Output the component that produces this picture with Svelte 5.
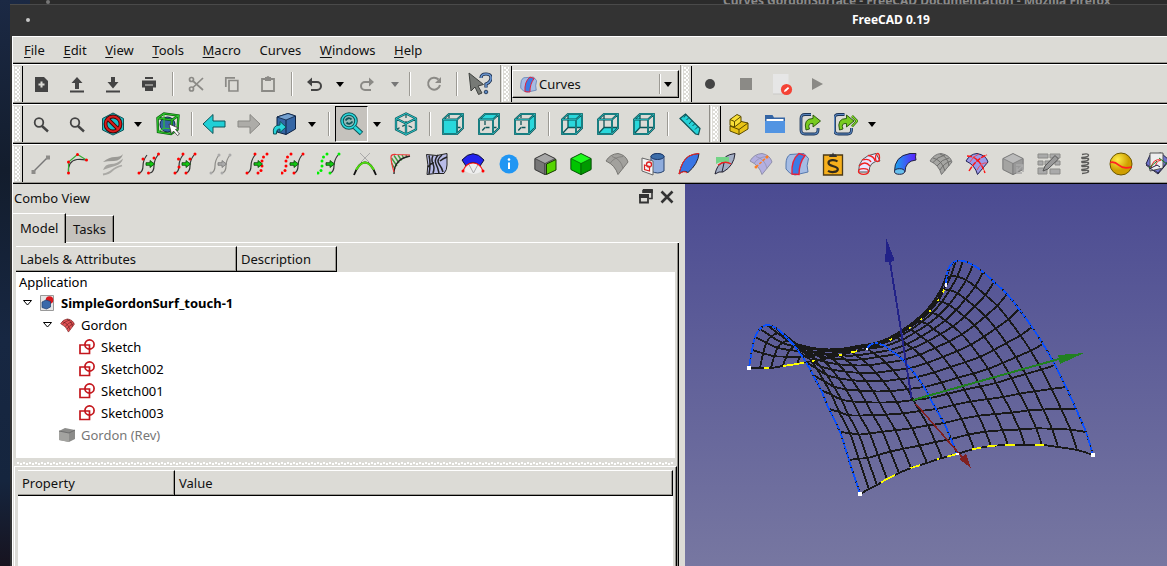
<script>
  const menus = ['File', 'Edit', 'View', 'Tools', 'Macro', 'Curves', 'Windows', 'Help'];

  const K = '#444';
  const G = '#8b8a86';
  const T = '#0d5558';
  const C = '#2ad8dc';

  // wireframe cube with one highlighted face; hidden edges go below a near face
  const cube = (face, near) => {
    const f = `<path d="${face}" fill="${C}"/>`;
    const inner = `<path d="M8 2V15.500H22M8 15.500 2 22" stroke="${T}" stroke-width="1.300" stroke-dasharray="${near ? '4 3' : 'none'}"/>`;
    const d = 'M2 7.500 8 2H22V16L16 22H2ZM2 7.500H16V22M16 7.500 22 2';
    return `<g stroke-linejoin="round" fill="none">${near ? inner + f : f + inner}<path d="${d}" stroke="${T}" stroke-width="2"/><path d="${d}" stroke="#2dbdc0" stroke-width=".8"/></g>`;
  };

  const dots = (pts, c) => pts.map(([x, y]) => `<circle cx="${x}" cy="${y}" r="1.5" fill="${c}"/>`).join('');
  const wave = (x, c = '#333') => `<path d="M${x} 21q4-1 4-7t4-11" fill="none" stroke="${c}" stroke-width="1.2"/>`;
  const arrow = (c, s) => `<path d="M9 10.7h4V8.5l4.5 3.5-4.5 3.5v-2.2H9z" fill="${c}" stroke="${s}" stroke-width=".8"/>`;
  const zig = (x) => [[x, 21], [x + 3, 18.5], [x + 4, 14], [x + 4, 9], [x + 5.5, 5], [x + 9, 2]];
  const fan = (f, s) => `<path d="M1 9Q5 2 13 1.500 21 3 23 10L13 22.500Q10 13 1 9Z" fill="${f}" stroke="${s}"/><path d="M5 11.500Q9 5 18 4.500M7 4.500Q16 7 18 16.500" fill="none" stroke="${s}" stroke-width=".7"/>`;
  const mesh = (s) => `<path d="M4 6Q13 8 16 19M11 2Q19 5 20 14M4 10.500Q8 5 16 3M8 14Q13 7 20 6M11 18Q15 11 22 9" fill="none" stroke="${s}" stroke-width=".9"/>`;
  const box = (a, b, c, s) => `<path d="M12 1.500 22 6.500V17.500L12 22.500 2 17.500V6.500Z" fill="${a}" stroke="${s}"/><path d="M2 6.500 12 11.500V22.500L2 17.500Z" fill="${b}" stroke="${s}" stroke-width=".7"/><path d="M12 11.500 22 6.500V17.500L12 22.500Z" fill="${c}" stroke="${s}" stroke-width=".7"/>`;
  const lens = `<circle cx="10" cy="10.500" r="4.300" fill="none" stroke="${K}" stroke-width="1.800"/><path d="m13 14 6 5.500" stroke="${K}" stroke-width="2.400"/>`;
  const share = (d) => `<path d="M12 2.500H6q-4 0-4 4V18q0 4 4 4H15q4 0 4-4V16" fill="none" stroke="#1d3557" stroke-width="2.800"/><path d="M12 2.500H6q-4 0-4 4V18q0 4 4 4H15q4 0 4-4V16" fill="none" stroke="#5a87c0" stroke-width="1.100"/><path d="M7 18Q4 6.500 14 6.500V3l7.500 6-7.500 6V11.500Q8 11 10.500 17Z" fill="#78cb20" stroke="#235008" stroke-width=".9"/>${d}`;

  const icons = {
    doc: `<path d="M6 5h9l4 4v11H6z" fill="${K}"/><path d="M12.500 9.500v6M9.500 12.500h6" stroke="#dcdbd6" stroke-width="2"/>`,
    up: `<path d="M5 18.500H19V20.500H5zM12 5l5.500 6H14v6h-4v-6H6.500z" fill="${K}"/>`,
    down: `<path d="M5 18.500H19V20.500H5zM10 5h4v5h3.500L12 16.500 6.500 10H10z" fill="${K}"/>`,
    print: `<path d="M8 5h8v2H8zM5 8.500H19v7H16v3.500H8v-3.500H5z" fill="${K}"/><path d="M8 13h8" stroke="#dcdbd6"/>`,
    cut: `<g fill="none" stroke="${G}" stroke-width="1.700"><circle cx="7.500" cy="7.500" r="2"/><circle cx="7.500" cy="17" r="2"/><path d="m9 9 10 9M9 15.500 19 6"/></g>`,
    copy: `<g fill="none" stroke="${G}" stroke-width="1.700"><path d="M5.800 15V5.800H15"/><path d="M9 8.500h8.800V19H9z"/></g>`,
    paste: `<path d="M6 7H18V19H6z" fill="none" stroke="${G}" stroke-width="1.800"/><path d="M9 5h6v4H9z" fill="${G}"/><circle cx="12" cy="5.500" r="1.500" fill="${G}"/>`,
    undo: `<path d="M6 10H15a3.700 3.700 0 0 1 0 8H9" fill="none" stroke="${K}" stroke-width="2"/><path d="M10 5.500 5 10l5 4.500z" fill="${K}"/>`,
    redo: `<path d="M18 10H10a3.700 3.700 0 0 0 0 8h6" fill="none" stroke="${G}" stroke-width="2"/><path d="m14 5.500 5 4.500-5 4.500z" fill="${G}"/>`,
    refresh: `<path d="M16.500 7.500A6 6 0 1 0 18 13" fill="none" stroke="${G}" stroke-width="2"/><path d="M19 5v6h-6z" fill="${G}"/>`,
    whats: `<path d="M1 1 15.500 12.500 10 14l4 7-3.500 1.500-3.500-7.500-4 4z" fill="#777a76" stroke="#3f423f"/><path d="M13 6q0-4 5-4t5 4-5 6v3.500" fill="none" stroke="#172a48" stroke-width="3.200"/><path d="M13 6q0-4 5-4t5 4-5 6v3.500" fill="none" stroke="#6b96d0" stroke-width="1.600"/><circle cx="18" cy="20" r="1.800" fill="#5a87c0" stroke="#172a48" stroke-width=".8"/>`,
    rec: `<circle cx="12" cy="12" r="5" fill="${K}"/>`,
    stop: `<path d="M6 6H18V18H6z" fill="${G}"/>`,
    macro: `<path d="M2 2H17.500V22H2z" fill="#e6e6e6"/><path d="M2 22h15" stroke="#c9c9c6"/><circle cx="15.500" cy="17.500" r="5.600" fill="#f44336"/><path d="m13 20 .5-2 3.500-3 1.200 1.200-3 3z" fill="#fff"/>`,
    play: `<path d="M7 6 18 12 7 18z" fill="${G}"/>`,
    lens,
    nodraw: `<path d="M12 1 22.500 6.500V18L12 23 1.500 18V6.500Z" fill="#1dbcc4" stroke="${T}"/><circle cx="12" cy="12" r="7.500" fill="none" stroke="#3b0505" stroke-width="3.800"/><path d="m6.800 6.800 10.500 10.500" stroke="#3b0505" stroke-width="3.800"/><circle cx="12" cy="12" r="7.500" fill="none" stroke="#d81b1b" stroke-width="2"/><path d="m6.500 6.500 11 11" stroke="#d81b1b" stroke-width="2"/>`,
    bbox: `<circle cx="11.500" cy="12.500" r="7.500" fill="#3465a4" stroke="#10284b"/><path d="M1.500 6 8 1.500 22.500 3.500 21.500 17.500 15 22 2 20zM1.500 6 16 8 15 22M16 8l6.500-4.500" fill="none" stroke="#0a5a0a" stroke-width="2.400"/><path d="M1.500 6 8 1.500 22.500 3.500 21.500 17.500 15 22 2 20zM1.500 6 16 8 15 22M16 8l6.500-4.500M8 2V16M2 20l6-4 13 1.500" fill="none" stroke="#2cc52c" stroke-width="1.100"/><path d="m13 12 9.500 4-3 1.500 4 4.500-2 1.500-4-4.500-2 3z" fill="#fff" stroke="#333" stroke-width=".8"/>`,
    back: `<path d="M1 12 11 2.500V9H23V15H11v6.500Z" fill="#20cfd6" stroke="${T}"/>`,
    fwd: `<path d="M23 12 13 2.500V9H1V15H13v6.500Z" fill="#adaca8" stroke="#898884"/>`,
    link: `<path d="M5 5 16 1.500 23.500 4V17L14 22.500 5 20Z" fill="#3465a4" stroke="#0d2242"/><path d="m5 5 9 3 9.500-4L16 1.500Z" fill="#729fcf" stroke="#0d2242" stroke-width=".8"/><path d="M14 8v14.500" stroke="#0d2242"/><path d="M1.500 22Q0 13 8 13V9.500l6 5.500-6 5.500V17Q4 17 4.500 22Z" fill="#27d4da" stroke="${T}"/>`,
    zoomsel: `<circle cx="9" cy="9" r="7" fill="#93b9b8" stroke="${T}" stroke-width="3.600"/><circle cx="9" cy="9" r="7" fill="none" stroke="${C}" stroke-width="1.600"/><path d="m14.500 15 7 6.500" stroke="${T}" stroke-width="5"/><path d="m14.500 15 6.500 6" stroke="${C}" stroke-width="3"/><path d="M5.500 8.500q3-4 6-1M12.500 9.500q-3 4-6 1" fill="none" stroke="${T}" stroke-width="1.800"/>`,
    iso: `<g fill="none" stroke-linejoin="round"><path d="M12 2V12M2 17.500 12 12.500 22 17.500" stroke="${T}" stroke-width="1.200" stroke-dasharray="4 3"/><path d="M12 1.500 22 6.500V17.500L12 22.500 2 17.500V6.500ZM2 6.500 12 11.500 22 6.500M12 11.500V22.500" stroke="${T}" stroke-width="2.300"/><path d="M12 1.500 22 6.500V17.500L12 22.500 2 17.500V6.500ZM2 6.500 12 11.500 22 6.500M12 11.500V22.500" stroke="#2dc9cc" stroke-width="1"/></g>`,
    front: cube('M2 7.500H16V22H2Z', true),
    top: cube('M2 7.500 8 2H22L16 7.500Z', true),
    right: cube('M16 7.500 22 2V16L16 22Z', true),
    rear: cube('M8 2H22V15.500H8Z'),
    bottom: cube('M2 22 8 15.500H22L16 22Z'),
    left: cube('M2 7.500 8 2V15.500L2 22Z'),
    ruler: `<path d="M2 6.500 7.500 2 22 16.500 20.500 22.500 17.500 22Z" fill="#25d2d8" stroke="${T}" stroke-width="1.200"/><path d="m8 2.500-2 3M11 5.500 8.500 8M14 8.500l-3 3.500M17 11.500 14.500 14M20 14.500l-3 3" stroke="${T}"/>`,
    part: `<path d="M3 14 12 9 21 11V17L12 22.500 3 19Z" fill="#e9c417" stroke="#5a4a00"/><path d="m3 14 9 3.500L21 11M12 17.500v5" stroke="#5a4a00" fill="none"/><path d="M3 7.500 10 2.500 14 4.500V10L7.500 15 3 13.500Z" fill="#f8df36" stroke="#5a4a00"/><path d="M3 7.500 7.500 9.500 14 4.500M7.500 9.500V15" stroke="#5a4a00" fill="none"/>`,
    folder: `<path d="M2 3H9.500l1.500 2.500H22V12H2z" fill="#3465a4"/><path d="M3.500 7H20.500V9H3.500z" fill="#fff"/><path d="M2 9H22V21H2z" fill="#5294e2"/>`,
    exp: share(''),
    exps: `<g transform="translate(-1.500)">${share('<path d="m19.500 4 5 5-5 5.500" fill="none" stroke="#2d6b10" stroke-width="2.600"/><path d="m19.500 4 5 5-5 5.500" fill="none" stroke="#8bdc2b" stroke-width="1.100"/>')}</g>`,
    line: `<path d="m4.500 19.500 14-14" stroke="#777" stroke-width="1.400"/><path d="M2.500 18h4v4h-4zM17 3.500h4v4h-4z" fill="#8d8c89"/>`,
    curve: `<path d="M3.500 21Q2.500 9 12 7.500q4-.5 9 .5" fill="none" stroke="#333" stroke-width="1.200"/><path d="M3.500 21V10L12.500 2.500 21.500 8" fill="none" stroke="#33ad33" stroke-width="1.100"/>${dots([[3.5, 21], [3.5, 10], [12.500, 2.500], [21.5, 8]], '#f00')}`,
    blend: `<g fill="#9a9995"><path d="M2 10Q8 5 14 5T22 2Q20 9 13 9T2 10Z"/><path d="M2 18Q4 12 10 12T22 6.500Q21 12 14 14T2 18Z" fill="#a5a4a0"/></g><path d="M2 22.500q6-1 9-4t10-5" fill="none" stroke="#aaa9a5" stroke-width="1.800"/>`,
    c1: wave(2) + wave(13) + dots([[2, 21], [6, 7], [11.500, 21], [17, 6], [21.500, 2]], '#f00') + arrow('#12c712', '#064006'),
    c2: wave(2) + wave(13) + dots([[2, 21], [6, 15], [5.500, 7], [10, 2], [13, 21], [17, 7], [22, 2]], '#f00') + arrow('#12c712', '#064006'),
    c3: wave(2, G) + wave(13, G) + dots([[2, 21], [10, 3], [13, 21], [21, 3]], '#aaa') + arrow('#aaa', '#777'),
    c4: wave(2) + dots([[2, 21], [10, 2]], '#f00') + dots(zig(13), '#f00') + arrow('#12c712', '#064006'),
    c5: wave(13) + dots([[13, 21], [22, 2]], '#f00') + dots(zig(1), '#f00') + arrow('#12c712', '#064006'),
    c6: wave(13) + dots([[13, 21], [22, 2]], '#0e0') + dots(zig(1), '#0e0') + arrow('#12c712', '#064006'),
    corner: `<path d="m7 1 9 9M17 1 8 10" stroke="#aaa"/><path d="M1 23Q6 10 12 10.500 18 10 23 23" fill="none" stroke="#111" stroke-width="1.800"/><path d="M3 17.800Q8 10.300 12 10.500 16 10.300 21 17.800" fill="none" stroke="#4fdc10" stroke-width="2"/>`,
    comb: `<path d="M6 17 2.500 11M8 14 2.500 6M10 11 5 3.500M12.500 8.500 9 3M15 6.500 13 3M18 5.500 17 3" stroke="#3f9b3f" stroke-width="1.400"/><path d="M5 22Q5 7 21 4" fill="none" stroke="#222" stroke-width="1.300"/><path d="M5 20Q2 10 2 5q0-3 5-2.500L21 3" fill="none" stroke="#e33" stroke-width="1.200"/>`,
    zebra: `<path d="M1.500 2.500Q12 5 22 1.500V13q0 5-3 8.500Q9 21 2 22.500 4 13 1.500 2.500Z" fill="#b9bce8" stroke="#222"/><path d="M4 3.500Q6 12 4 22M8 3.500Q6 8 8 12T8 21M13 3Q9 8 11 12t3 9M17 3Q11 8 14 12t4 8M22 5q-5 2-7 4M3 15q3-4 6-4" fill="none" stroke="#222" stroke-width="1.500"/>`,
    trim: `<path d="M1 8Q12-4.500 23 8L19 14Q12 7 5 14Z" fill="#2222ee" stroke="#113"/><path d="M5 14Q12 8 19 14l2 5q-8 6-17 0z" fill="#eee"/><path d="M8 12.500l4.500 8.500 4.500-8.500" fill="none" stroke="#aaa"/><path d="M2 19Q5 11 12 11t10 8" fill="none" stroke="#f11" stroke-width="1.200"/>${dots([[2, 19], [22, 19]], '#f00')}`,
    info: `<circle cx="12" cy="12" r="9.500" fill="#2196f3"/><path d="M12 10.500V17" stroke="#fff" stroke-width="2"/><circle cx="12" cy="7.500" r="1.300" fill="#fff"/>`,
    boxg: box('#a7a7a7', '#777', '#8b8b8b', '#333') + `<path d="m13.500 12 9.500-4.500V18L13.500 22.500Z" fill="#55d400" stroke="#163b00"/>`,
    green: box('#1dfa1d', '#00c400', '#009a00', '#075207'),
    fang: fan('#a2a19d', '#777672'),
    sketchb: `<path d="M10 4q6-5 13 0V19q-6 4-13 0z" fill="#8facdc" stroke="#26426f"/><ellipse cx="16.500" cy="4.500" rx="6.500" ry="3" fill="#3c6da9" stroke="#1c3868"/><path d="m1 6 11 3V23L1 19Z" fill="#f4f4f4" stroke="#666"/><circle cx="8" cy="12.500" r="2.500" fill="none" stroke="#d22" stroke-width="1.300"/><path d="m3.500 13 5 1.500v4.500l-5-1.500z" fill="none" stroke="#d22" stroke-width="1.200"/>`,
    sweep: `<path d="M2 22Q5 8 12 4 16 2 22 1.500 21 12 11 20.500 7 17.500 2 22Z" fill="#3975e4" stroke="#223"/><path d="M2 22Q5 8 12 4 16 2 22 1.500M2 22q5-4 8-1" fill="none" stroke="#f22"/>`,
    sweepg: `<path d="M2 22Q4 13 9 11 10 3 22 1.500 21 14 10 20 6 19 2 22Z" fill="#a4afc6" stroke="#223"/><path d="M3 5H16V12Q9 8 3 12Z" fill="#74d487"/><path d="M5 13Q12 8 18 12" fill="none" stroke="#e22" stroke-width="1.300"/><path d="M11 11 9 20" stroke="#223"/>`,
    fanv: fan('#b3afe0', '#8f8fab') + `<path d="M7 15 19 4" stroke="#ff7d22" stroke-width="1.500" stroke-dasharray="3 1.500"/>${dots([[7, 15], [18, 5]], '#ff7d22')}`,
    curves: `<path d="M1 12Q1 5 5 2.500l14-1 4.500 5Q21 14 23 20L10 23Q4 22 1 17Z" fill="#a5bce4" stroke="#5679ae"/><path d="M7 22Q6 8 14 1.500L20 3.500Q14 11 14 22.500Z" fill="#3b7be5" stroke="#e8213a" stroke-width="1.400"/>`,
    clip: `<path d="M2.500 3H21.500V23H2.500z" fill="#f7b01c" stroke="#4c3b18" stroke-width="1.300"/><path d="M8 5 9 2.500H11L12 .5 13 2.500H15L16 5Z" fill="#333"/><path d="M16.500 9.500C14 7.500 7.500 7.500 7.500 11S16.800 14 16.800 17.200 10 20.800 7 18.800" fill="none" stroke="#332b1c" stroke-width="2.200"/>`,
    pipe: `<path d="M1.500 20Q1 4 19 1.500L23 9Q12 9 12 20Z" fill="#e8e5ff" stroke="#555"/><g fill="none" stroke="#f02020" stroke-width="1.300"><ellipse cx="6.500" cy="19.500" rx="5" ry="2.800"/><path d="M2 14Q8 8 13 14M5 8Q12 6 14 10M11 3.500Q17 4 18 9"/><ellipse cx="20.500" cy="5.500" rx="2" ry="4"/></g>`,
    pipeb: `<path d="M1.500 20Q1 4 17 1.500H23Q22 5 23 8 12 9 12 20Z" fill="url(#pb)" stroke="#224"/><ellipse cx="6.500" cy="19.500" rx="5" ry="2.800" fill="#68c0ee" stroke="#224"/>`,
    meshg: `<path d="M1 9Q5 2 12 1.500 21 3 23 10L12.500 22.500Q10 13 1 9Z" fill="#a5a5a2" stroke="#777"/>${mesh('#6a6a68')}`,
    meshr: `<path d="M1 9Q5 2 12 1.500 21 3 23 10L12.500 22.500Q10 13 1 9Z" fill="#9d9ae8" stroke="#225"/><path d="M2 4Q14 4 20 21M4 19Q12 6 22 3" fill="none" stroke="#f11" stroke-width="1.400" stroke-dasharray="5 1"/><path d="M5 10Q8 4 14 2M12 18Q16 10 22 11" fill="none" stroke="#f33" stroke-width=".8"/>`,
    cubeo: box('#bbb', '#a4a4a2', '#999', '#777') + `<path d="M15 13h7v7m0-7-6 6m0-4v6h5" fill="none" stroke="#aaa" stroke-width="1.400"/>`,
    wall: `<g fill="#aaa" stroke="#8b8b88"><path d="M1 2h10v4H1zM13 2H23V6H13zM1 9h5v4H1zM8 9h7v4H8zM18 9h5v4h-5zM1 16h9v6H1zM13 17H23v5H13z"/></g><path d="m6 19 2-5L18 3.500 21.500 7 11 17Z" fill="#999" stroke="#555"/>`,
    spring: `<path d="M9 2.500Q15 1 15.500 3T9 5.500Q8 7 12 6.500t3.500 1T9 9.500Q8 11 12 10.500t3.500 1T9 13.500Q8 15 12 14.500t3.500 1T9 17.500Q8 19 12 18.500t3.500 1T9 21.500" fill="none" stroke="#5c5c5a" stroke-width="1.400"/>`,
    ball: `<circle cx="12" cy="12" r="11" fill="url(#gb)" stroke="#6b5600"/><path d="M1 12Q5 10 10 13.500t13 0" fill="none" stroke="#f22" stroke-width="1.600" transform="rotate(8 12 12)"/>`,
    tex: `<path d="M1 12 5 3 16 1 24 8 13 21Z" fill="#6f74ce" stroke="#224"/><path d="M5 1H18V16L5 19Z" fill="#eee" stroke="#555"/><path d="M6 16Q8 6 16 8q-6 2-5 6" fill="none" stroke="#e22"/><path d="M1 13 13 22 24 9M4 17 12 13l3 2" fill="none" stroke="#224"/><path d="M14 6 22 12M4 16l8-7" stroke="#18781d"/>`
  };

  // toolbar layout: [icon, cell width]; "|" separator, "v" drop-down arrow, "_" gap
  const rowA = [['doc', 36], ['up', 36], ['down', 36], ['print', 36], ['|', 11], ['cut', 36], ['copy', 36], ['paste', 35], ['|', 13], ['undo', 32], ['v', 19], ['redo', 36], ['vg', 19], ['|', 12], ['refresh', 35], ['|', 11], ['whats', 36]];
  const rowA2 = [['rec', 35], ['stop', 37], ['macro', 38], ['play', 30]];
  const rowB = [['lens', 36], ['lens', 36], ['nodraw', 35], ['v', 16], ['bbox', 43], ['|', 6], ['back', 37], ['fwd', 34], ['link', 36], ['v', 19], ['_', 2], ['|', 12], ['zoomsel', 33], ['v', 18], ['iso', 40], ['|', 8], ['front', 38], ['top', 34], ['right', 38], ['|', 10], ['rear', 36], ['bottom', 36], ['left', 36], ['|', 12], ['ruler', 31]];
  const rowB2 = [['part', 36], ['folder', 36], ['exp', 36], ['exps', 34], ['v', 18]];
  const rowC = ['line', 'curve', 'blend', 'c1', 'c2', 'c3', 'c4', 'c5', 'c6', 'corner', 'comb', 'zebra', 'trim', 'info', 'boxg', 'green', 'fang', 'sketchb', 'sweep', 'sweepg', 'fanv', 'curves', 'clip', 'pipe', 'pipeb', 'meshg', 'meshr', 'cubeo', 'wall', 'spring', 'ball', 'tex'].map((n) => [n, 36]);

  const sketches = ['Sketch', 'Sketch002', 'Sketch001', 'Sketch003'];

  // Gordon surface: three profiles and two guides, 16 x 16 iso-lines
  const left = [[749,368],[752,350],[755,337],[760,329],[767,325],[774,327],[780,331],[786,337],[793,344],[799,352],[806,362],[813,375],[821,390],[829,409],[840,432],[849,460],[860,494]];
  const mid = [[867,349],[869,346],[872,344],[875,343],[880,344],[885,346],[890,350],[896,354],[903,360],[910,368],[917,377],[924,387],[930,398],[936,409],[944,423],[951,439],[957,454]];
  const right = [[946,285],[947,274],[950,266],[956,261],[963,261],[973,265],[983,272],[994,282],[1007,294],[1019,309],[1032,327],[1043,344],[1055,365],[1066,387],[1076,409],[1086,432],[1093,455]];
  const back = [[749,368],[760,368],[771,368],[783,366],[797,364],[812,361],[829,358],[848,353],[867,349],[884,343],[898,335],[909,328],[919,321],[928,313],[935,305],[941,296],[946,285]];
  const front = [[860,494],[869,489],[877,485],[887,479],[899,473],[911,468],[927,463],[942,458],[957,454],[974,449],[991,446],[1008,445],[1025,445],[1042,445],[1058,447],[1077,450],[1093,455]];

  function surf(i, j) {
    const u = i / 16, v = j / 16;
    const a = 2 * (u - 0.5) * (u - 1), b = 4 * u * (1 - u), c = 2 * u * (u - 0.5);
    return [0, 1].map((k) => {
      const p = (n) => a * left[n][k] + b * mid[n][k] + c * right[n][k];
      return p(j) + (1 - v) * (back[i][k] - p(0)) + v * (front[i][k] - p(16));
    });
  }
  // Catmull-Rom path through points, relative to the view origin
  function smooth(pts) {
    const q = pts.map(([x, y]) => [x - 685, y - 184]);
    let d = `M${q[0]}`;
    for (let i = 0; i < q.length - 1; i++) {
      const p0 = q[i - 1] ?? q[i], p1 = q[i], p2 = q[i + 1], p3 = q[i + 2] ?? p2;
      const f = (n) => n.toFixed(1);
      d += `C${f(p1[0] + (p2[0] - p0[0]) / 6)} ${f(p1[1] + (p2[1] - p0[1]) / 6)} ${f(p2[0] - (p3[0] - p1[0]) / 6)} ${f(p2[1] - (p3[1] - p1[1]) / 6)} ${p2[0].toFixed(1)} ${p2[1].toFixed(1)}`;
    }
    return d;
  }
  const idx = Array.from({ length: 17 }, (_, n) => n);
  const grid = [...idx.map((i) => smooth(idx.map((j) => surf(i, j)))), ...idx.map((j) => smooth(idx.map((i) => surf(i, j))))];
  const blues = [left, mid, right].map(smooth);
  const yellows = [back, front].map(smooth);
</script>

{#snippet icon(name, size = 24)}
  <svg viewBox="0 0 24 24" width={size} height={size}>{@html icons[name]}</svg>
{/snippet}

{#snippet tools(items)}
  {#each items as [name, w]}
    <div class="cell" class:pressed={name === 'zoomsel'} style="width:{w}px">
      {#if name === '|'}<i class="sep"></i>
      {:else if name === 'v' || name === 'vg'}<i class="drop" class:off={name === 'vg'}></i>
      {:else if name !== '_'}{@render icon(name)}{/if}
    </div>
  {/each}
{/snippet}

<svg class="defs" width="0" height="0">
  <linearGradient id="pb"><stop offset="0" stop-color="#19a7ea" /><stop offset="1" stop-color="#5b1dff" /></linearGradient>
  <radialGradient id="gb" cx=".35" cy=".3"><stop offset="0" stop-color="#ffee4a" /><stop offset="1" stop-color="#cf9f00" /></radialGradient>
</svg>

<div class="desktop">
  <div class="behind"><span class="dot"></span><span class="behindtitle">Curves GordonSurface - FreeCAD Documentation - Mozilla Firefox</span></div>
  <div class="window">
    <div class="titlebar"><span class="dot"></span><b>FreeCAD 0.19</b></div>
    <div class="body">
      <nav>{#each menus as m}<span>{#if m === 'Curves'}{m}{:else}<u>{m[0]}</u>{m.slice(1)}{/if}</span>{/each}</nav>
      <div class="bar">
        <div class="group" style="width:488px"><i class="handle"></i>{@render tools(rowA)}</div>
        <div class="group combo" style="width:179px"><i class="handle"></i>
          <div class="select">{@render icon('curves', 17)}<span>Curves</span><i class="sep"></i><i class="drop"></i></div>
        </div>
        <div class="group last"><i class="handle"></i>{@render tools(rowA2)}</div>
      </div>
      <div class="bar">
        <div class="group" style="width:697px"><i class="handle"></i>{@render tools(rowB)}</div>
        <div class="group last"><i class="handle"></i>{@render tools(rowB2)}</div>
      </div>
      <div class="bar"><div class="group last"><i class="handle"></i>{@render tools(rowC)}</div></div>
      <main>
        <aside>
          <header>
            <span>Combo View</span>
            <svg width="14" height="15" viewBox="0 0 14 15"><path d="M4 4V1.500H13V9.500H10" fill="none" stroke="#333" stroke-width="1.600" /><path d="M4 0H13.800V4H4zM0 5H10V9H0z" fill="#333" /><path d="M1 7V13.500H9V7" fill="none" stroke="#333" stroke-width="1.800" /></svg>
            <svg width="14" height="14" viewBox="0 0 14 14"><path d="m1.500 1.500 11 11M12.500 1.500l-11 11" stroke="#333" stroke-width="2.600" /></svg>
          </header>
          <div class="tabs"><div class="tab on">Model</div><div class="tab">Tasks</div><div class="fill"></div></div>
          <div class="pane">
            <div class="heads"><div style="width:221px">Labels &amp; Attributes</div><div style="width:100px">Description</div></div>
            <div class="tree">
              <div class="row app">Application</div>
              <div class="row d0"><svg class="tri" width="9" height="6"><path d="M.5.500H8.500L4.500 5z" /></svg>
                <svg class="ic" width="14" height="16" viewBox="0 0 14 16"><path d="M.5.500H13.500V15.500H.5z" fill="#e6e6e6" stroke="#999" /><circle cx="9.500" cy="5" r="3.800" fill="#d8171d" /><path d="m2 7 4-2 4.500 1.500V12L6.500 14 2 12.500z" fill="#3969aa" stroke="#1e3c6b" stroke-width=".7" /></svg>
                <b>SimpleGordonSurf_touch-1</b></div>
              <div class="row d1"><svg class="tri" width="9" height="6"><path d="M.5.500H8.500L4.500 5z" /></svg>
                <svg class="ic" width="15" height="15" viewBox="0 0 24 24"><path d="M1 9Q5 2 12 1.500 21 3 23 10L13.500 22.500Q10 13 1 9Z" fill="#e35356" stroke="#722" />{@html mesh('#5a1518')}</svg>
                Gordon</div>
              {#each sketches as s}
                <div class="row d2"><svg class="ic" width="16" height="16" viewBox="0 0 16 16"><g fill="none" stroke="#c4161c" stroke-width="1.700"><path d="M1 6H10.500V14.500H1z" /><circle cx="10.500" cy="5.500" r="4.600" /></g></svg>{s}</div>
              {/each}
              <div class="row d1 rev"><svg class="ic" width="16" height="15" viewBox="0 0 16 15"><path d="M0 3 6 0 16 2V11L10 14 0 12Z" fill="#8c8c8a" /><path d="m0 3 10 2v9L0 12Z" fill="#a3a3a0" /><path d="M0 3 10 5 16 2" fill="none" stroke="#666" stroke-width=".8" /></svg>Gordon (Rev)</div>
            </div>
            <div class="splitter"></div>
            <div class="props">
              <div class="heads"><div style="width:157px">Property</div><div class="grow">Value</div></div>
              <div class="blank"></div>
            </div>
          </div>
        </aside>
        <section>
          <svg width="482" height="382" viewBox="0 0 482 382" shape-rendering="crispEdges">
            <g fill="none" stroke="#191919" stroke-width="1.850">{#each grid as d}<path {d} />{/each}</g>
            <g fill="none" stroke="#0a50ff" stroke-width="1.800" stroke-dasharray="9 1 4 1">{#each blues as d}<path {d} />{/each}</g>
            <g fill="none" stroke="#ff0" stroke-width="1.800"><path d={yellows[0]} stroke-dasharray="0 15 5 14 22 8 3 24 3 10 6 34 3 20 2 12 2 10 2 12 2 8 3 30" /><path d={yellows[1]} stroke-dasharray="0 24 16 17 10 18 2 8 12 14 9 6 10 8 10 20 9 30" /></g>
            <path d="M205 78 215 140 226.500 214" fill="none" stroke="#222288" stroke-width="1.900" /><path d="M201.500 55 209.500 76 206 78H200z" fill="#222288" />
            <path d="M228 216 374 175" stroke="#218021" stroke-width="2" /><path d="m373 171 26-2-24 11z" fill="#218021" />
            <path d="m231 220 46 53" stroke="#802020" stroke-width="1.600" /><path d="m274 275 7-5 5 14z" fill="#802020" />
            <g fill="#fff"><path d="M62 182h4v4h-4zM173 308h4v4h-4zM406 269h4v4h-4zM181 164h2v2h-2zM260 99h2v4h-2zM271 269h3v2h-3z" /></g>
          </svg>
        </section>
      </main>
    </div>
  </div>
</div>

<style>
  :global(body) { margin: 0; overflow: hidden; }
  * { box-sizing: border-box; }
  .defs { position: absolute; }
  .desktop { width: 1167px; height: 566px; overflow: hidden; background: linear-gradient(#1b2944, #131d2d 30%, #172742 60%, #15253e 85%, #17131f); padding-left: 10px; display: flex; flex-direction: column; font: 13px "Noto Sans", sans-serif; color: #111; }
  .behind { height: 4px; flex: none; margin-left: 20px; background: #2b2b2b; display: flex; overflow: hidden; }
  .behind .dot { margin: 0 0 0 16px; background: #777; }
  .behindtitle { margin-left: 673px; margin-top: -7px; font: bold 12px/16px "Noto Sans", sans-serif; color: #8b8b8b; white-space: nowrap; }
  .window { flex: 1; background: #333; border-top: 1px solid #4a4a4a; padding-left: 2px; display: flex; flex-direction: column; min-height: 0; }
  .dot { width: 4px; height: 4px; border-radius: 50%; background: #c8c8c8; flex: none; }
  .titlebar { height: 31px; display: flex; align-items: center; padding: 0 0 2px 14px; color: #fff; font-size: 12px; }
  .titlebar b { margin-left: 822px; white-space: nowrap; }
  .titlebar .dot { margin-top: 1px; }
  .body { flex: 1; background: #dcdbd6; border-left: 1px solid #fff; min-height: 0; display: flex; flex-direction: column; overflow: hidden; }
  nav { height: 28px; flex: none; border-top: 1px solid #fff; border-bottom: 1px solid #000; box-shadow: inset 0 -1px #9c9a94; display: flex; gap: 18.600px; padding-left: 11px; line-height: 27px; }
  u { text-underline-offset: 2px; }
  .bar { height: 40px; flex: none; border-top: 1px solid #fff; border-bottom: 1px solid #000; box-shadow: inset 0 -1px #9c9a94; display: flex; }
  .group { display: flex; flex: none; align-items: center; border-right: 1px solid #8f8d87; margin-right: 1px; }
  .group.last { flex: 1; border: 0; margin: 0; min-width: 0; overflow: hidden; }
  .handle { width: 10px; height: 36px; flex: none; border-left: 1px solid #fff; border-right: 1px solid #000; background: radial-gradient(circle at 1px 1px, #fff .8px, transparent 1px) 0 0 / 4px 4px content-box, radial-gradient(circle at 1px 1px, #fff .8px, transparent 1px) 2px 2px / 4px 4px content-box; padding: 1px 2px 1px 1px; }
  .cell { flex: none; height: 36px; display: flex; align-items: center; justify-content: center; }
  .pressed { background: #c5c2bd; border: 1px solid #000; border-right-color: #fff; border-bottom-color: #fff; }
  .cell svg { display: block; flex: none; }
  .sep { width: 2px; height: 24px; border-left: 1px solid #9c9a94; border-right: 1px solid #fff; }
  .drop { width: 0; height: 0; border: 4.500px solid transparent; border-top: 5px solid #000; border-bottom: 0; }
  .drop.off { border-top-color: #777; }
  .select { width: 167px; height: 28px; display: flex; align-items: center; border: 1px solid #fff; border-right-color: #000; border-bottom-color: #000; box-shadow: inset -1px -1px #9c9a94; padding-left: 7px; }
  .select span { margin-left: 2px; flex: 1; }
  .select .drop { margin: 0 6px 0 3px; }
  .select .sep { height: 20px; }
  main { flex: 1; display: flex; min-height: 0; }
  aside { width: 672px; flex: none; display: flex; flex-direction: column; }
  header { height: 29px; flex: none; display: flex; align-items: center; padding: 0 11px 2px 1px; gap: 7px; }
  header span { flex: 1; }
  header svg { margin-bottom: 2px; }
  .tabs { display: flex; align-items: flex-end; height: 30px; flex: none; background: linear-gradient(#fff, #fff) 53px 29px / 613px 1px no-repeat; }
  .tab { height: 27px; width: 48px; padding-left: 7px; line-height: 26px; background: #c5c2bd; border-top: 1px solid #fff; border-right: 1px solid #000; box-shadow: inset -1px 0 #8f8d87; margin-bottom: 1px; }
  .tab.on { height: 30px; width: 53px; background: none; margin-bottom: 0; line-height: 29px; }
  .tabs .fill { flex: 1; }
  .pane { flex: 1; width: 666px; border-right: 1px solid #000; box-shadow: inset -1px 0 #8f8d87; padding: 3px 0 0 1px; display: flex; flex-direction: column; }
  .heads { height: 26px; flex: none; display: flex; }
  .heads div { border: 1px solid #000; border-left: 0; border-top-color: #fff; box-shadow: inset -1px -1px #9c9a94; padding-left: 4px; line-height: 25px; }
  .pane > .heads { margin-left: 2px; }
  .grow { flex: 1; }
  .tree { height: 186px; margin: 0 3px 0 2px; flex: none; background: #fff; color: #000; }
  .row { height: 22px; display: flex; align-items: center; white-space: nowrap; }
  .app { height: 20px; padding-left: 3px; }
  .d0 { padding-left: 7px; }
  .d1 { padding-left: 27px; }
  .d2 { padding-left: 63px; }
  .row .ic { margin: 0 7px 0 8px; }
  .row.d1 .ic { margin: 0 6px 0 8px; }
  .row.d2 .ic, .row.rev .ic { margin: 0 6px 0 0; }
  .row.rev { padding-left: 43px; color: #777; }
  .tri { overflow: visible; fill: none; stroke: #000; }
  .splitter { height: 8px; flex: none; margin: 0 4px 0 3px; background: radial-gradient(circle at 1px 1px, #fff .9px, transparent 1.100px) 0 4px / 6px 4px repeat-x, radial-gradient(circle at 1px 1px, #fff .9px, transparent 1.100px) 3px 5px / 6px 4px repeat-x; }
  .props { flex: 1; width: 663px; border: 1px solid #fff; border-right-color: #000; border-bottom: 0; box-shadow: inset -1px 0 #8f8d87; padding: 3px 3px 0 3px; display: flex; flex-direction: column; }
  .blank { flex: 1; background: #fff; }
  section { flex: 1; background: linear-gradient(#4b4b92, #7777a1); overflow: hidden; }
  section svg { display: block; }
</style>
